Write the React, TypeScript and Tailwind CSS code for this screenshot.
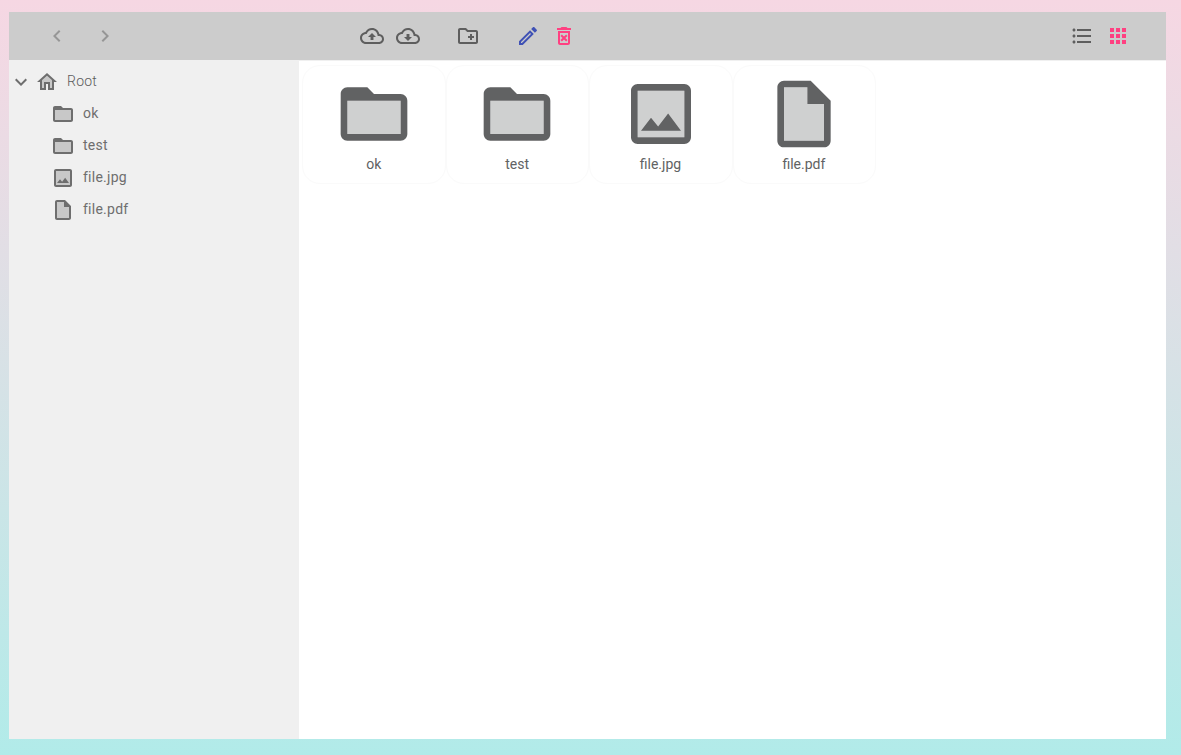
import type { ReactNode } from "react";

type IconName = "folder" | "image" | "file" | "home";

function Svg({ children, className = "" }: { children: ReactNode; className?: string }) {
  return (
    <svg viewBox="0 0 24 24" fill="currentColor" className={`block size-6 shrink-0 ${className}`}>
      {children}
    </svg>
  );
}

const twoTone: Record<IconName, { fill: string; line: string }> = {
  folder: {
    fill: "M4 8h16v10H4z",
    line: "M20 6h-8l-2-2H4c-1.1 0-1.99.9-1.99 2L2 18c0 1.1.9 2 2 2h16c1.1 0 2-.9 2-2V8c0-1.1-.9-2-2-2zm0 12H4V8h16v10z",
  },
  image: {
    fill: "M5 5h14v14H5z",
    line: "M19 3H5c-1.1 0-2 .9-2 2v14c0 1.1.9 2 2 2h14c1.1 0 2-.9 2-2V5c0-1.1-.9-2-2-2zm0 16H5V5h14v14zM14.14 11.86l-3 3.87L9 13.14 6 17h12z",
  },
  file: {
    fill: "M13 4H6v16h12V9h-5V4z",
    line: "M20 8l-6-6H6c-1.1 0-1.99.9-1.99 2L4 20c0 1.1.89 2 1.99 2H18c1.1 0 2-.9 2-2V8zm-2 12H6V4h7v5h5v11z",
  },
  home: {
    fill: "M5 12v.5h2V18h2v-6h6v6h2v-7.81l-5-4.5-5 4.5z",
    line: "M12 3L2 12h3v8h6v-6h2v6h6v-8h3L12 3zm5 15h-2v-6H9v6H7v-7.81l5-4.5 5 4.5V18z",
  },
};

function TwoTone({ name, className }: { name: IconName; className?: string }) {
  return (
    <Svg className={className}>
      <path d={twoTone[name].fill} opacity=".3" />
      <path d={twoTone[name].line} />
    </Svg>
  );
}

const files: { name: string; icon: IconName }[] = [
  { name: "ok", icon: "folder" },
  { name: "test", icon: "folder" },
  { name: "file.jpg", icon: "image" },
  { name: "file.pdf", icon: "file" },
];

const cloud =
  "M19.35 10.04C18.67 6.59 15.64 4 12 4 9.11 4 6.6 5.64 5.35 8.04 2.34 8.36 0 10.91 0 14c0 3.31 2.69 6 6 6h13c2.76 0 5-2.24 5-5 0-2.64-2.05-4.78-4.65-4.96zM19 18H6c-2.21 0-4-1.79-4-4 0-2.05 1.53-3.76 3.56-3.97l1.07-.11.5-.95C8.08 7.14 9.94 6 12 6c2.62 0 4.88 1.86 5.39 4.43l.3 1.5 1.53.11c1.56.1 2.78 1.41 2.78 2.96 0 1.65-1.35 3-3 3z";

function Toolbar() {
  return (
    <header className="flex h-12 shrink-0 items-center bg-[#cccccc] pr-9 pl-9 text-[#5e5e5e]">
      <div className="flex w-[315px] gap-6 text-[#969696]">
        <button aria-label="Back">
          <Svg><path d="M15.41 7.41L14 6l-6 6 6 6 1.41-1.41L10.83 12z" /></Svg>
        </button>
        <button aria-label="Forward">
          <Svg><path d="M10 6L8.59 7.41 13.17 12l-4.58 4.59L10 18l6-6z" /></Svg>
        </button>
      </div>
      <div className="flex gap-9">
        <div className="flex gap-3">
          <button aria-label="Upload">
            <Svg><path d={cloud} /><path d="M8 13h2.55v3h2.9v-3H16l-4-4z" /></Svg>
          </button>
          <button aria-label="Download">
            <Svg><path d={cloud} /><path d="M13.45 10h-2.9v3H8l4 4 4-4h-2.55z" /></Svg>
          </button>
        </div>
        <button aria-label="New folder">
          <Svg>
            <path d="M20 6h-8l-2-2H4c-1.11 0-1.99.89-1.99 2L2 18c0 1.11.89 2 2 2h16c1.11 0 2-.89 2-2V8c0-1.11-.89-2-2-2zm0 12H4V6h5.17l2 2H20v10zm-8-4h2v2h2v-2h2v-2h-2v-2h-2v2h-2z" />
          </Svg>
        </button>
        <div className="flex gap-3">
          <button aria-label="Rename" className="text-[#3f51b5]">
            <Svg>
              <path d="M14.06 9.02l.92.92L5.92 19H5v-.92l9.06-9.06M17.66 3c-.25 0-.51.1-.7.29l-1.83 1.83 3.75 3.75 1.83-1.83c.39-.39.39-1.02 0-1.41l-2.34-2.34c-.2-.2-.45-.29-.71-.29zm-3.6 3.19L3 17.25V21h3.75L17.81 9.94l-3.75-3.75z" />
            </Svg>
          </button>
          <button aria-label="Delete" className="text-[#ff4081]">
            <Svg>
              <path d="M14.12 10.47L12 12.59l-2.13-2.12-1.41 1.41L10.59 14l-2.12 2.12 1.41 1.41L12 15.41l2.12 2.12 1.41-1.41L13.41 14l2.12-2.12zM15.5 4l-1-1h-5l-1 1H5v2h14V4zM6 19c0 1.1.9 2 2 2h8c1.1 0 2-.9 2-2V7H6v12zM8 9h8v10H8V9z" />
            </Svg>
          </button>
        </div>
      </div>
      <div className="ml-auto flex gap-3">
        <button aria-label="List view">
          <Svg>
            <path d="M4 10.5c-.83 0-1.5.67-1.5 1.5s.67 1.5 1.5 1.5 1.5-.67 1.5-1.5-.67-1.5-1.5-1.5zm0-6c-.83 0-1.5.67-1.5 1.5S3.17 7.5 4 7.5 5.5 6.83 5.5 6 4.83 4.5 4 4.5zm0 12c-.83 0-1.5.68-1.5 1.5s.68 1.5 1.5 1.5 1.5-.68 1.5-1.5-.67-1.5-1.5-1.5zM7 19h14v-2H7v2zm0-6h14v-2H7v2zm0-8v2h14V5H7z" />
          </Svg>
        </button>
        <button aria-label="Grid view" className="text-[#ff4081]">
          <Svg>
            <path d="M4 8h4V4H4v4zm6 12h4v-4h-4v4zm-6 0h4v-4H4v4zm0-6h4v-4H4v4zm6 0h4v-4h-4v4zm6-10v4h4V4h-4zm-6 4h4V4h-4v4zm6 6h4v-4h-4v4zm0 6h4v-4h-4v4z" />
          </Svg>
        </button>
      </div>
    </header>
  );
}

export default function App() {
  return (
    <div className="h-[755px] bg-linear-to-b from-[#f6d7e3] to-[#b1ebe9] pt-3 pr-[15px] pb-4 pl-[9px] font-['Roboto',sans-serif] text-sm">
      <div className="flex h-full flex-col">
        <Toolbar />
        <div className="flex min-h-0 flex-1">
          <aside className="w-[290px] shrink-0 bg-[#f0f0f0] pt-1.5 tracking-[0.25px] text-[#6e6e6e]">
            <div className="flex h-8 items-center">
              <Svg><path d="M16.59 8.59L12 13.17 7.41 8.59 6 10l6 6 6-6z" /></Svg>
              <TwoTone name="home" className="ml-0.5" />
              <span className="ml-2 pb-0.5 font-light text-[#5c5c5c]">Root</span>
            </div>
            {files.map((f) => (
              <div key={f.name} className="flex h-8 items-center pl-[42px]">
                <TwoTone name={f.icon} />
                <span className="ml-2 pb-0.5">{f.name}</span>
              </div>
            ))}
          </aside>
          <main className="flex flex-1 items-start border-t border-[#f0f0f0] bg-white pt-1 pl-[3.4px]">
            {files.map((f) => (
              <div
                key={f.name}
                className="flex h-[119px] w-[143.4px] flex-col items-center rounded-[18px] border border-[#fafafa] pt-2 text-[#616263]"
              >
                <TwoTone name={f.icon} className="size-20!" />
                <span className="pr-[0.8px]">{f.name}</span>
              </div>
            ))}
          </main>
        </div>
      </div>
    </div>
  );
}
